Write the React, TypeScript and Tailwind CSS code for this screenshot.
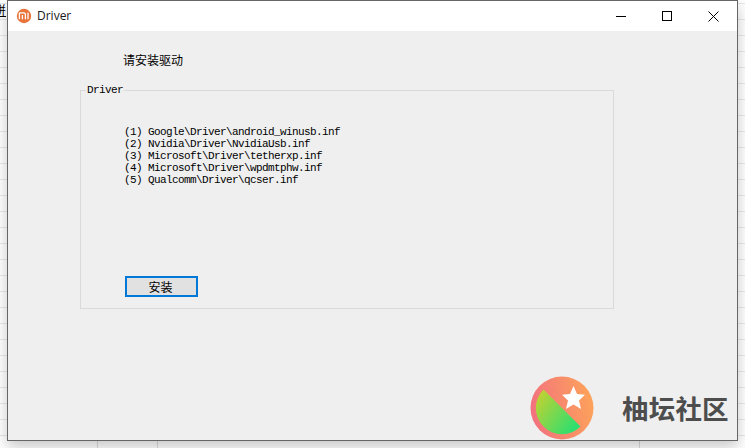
import React from 'react'

const drivers = [
  '(1) Google\\Driver\\android_winusb.inf',
  '(2) Nvidia\\Driver\\NvidiaUsb.inf',
  '(3) Microsoft\\Driver\\tetherxp.inf',
  '(4) Microsoft\\Driver\\wpdmtphw.inf',
  '(5) Qualcomm\\Driver\\qcser.inf',
]

const simsun = "font-['Liberation_Mono','Noto_Sans_CJK_SC',monospace]"

function MiIcon() {
  return (
    <svg width="16" height="16" viewBox="0 0 16 16" className="shrink-0">
      <circle cx="8" cy="8" r="7.2" fill="#e8743b" />
      <path d="M3.4 4.8h4.4a1.6 1.6 0 0 1 1.6 1.6v4.8M3.4 4.8v6.4M6.4 7v4.2M12 4.8v6.4" fill="none" stroke="#fff" strokeWidth="1.3" />
    </svg>
  )
}

function Watermark() {
  return (
    <svg width="64" height="64" viewBox="0 0 64 64">
      <defs>
        <linearGradient id="ring" x1="0" y1="0.6" x2="1" y2="0.4">
          <stop offset="0" stopColor="#f2707f" />
          <stop offset="1" stopColor="#fda35a" />
        </linearGradient>
        <linearGradient id="leaf" x1="0" y1="0" x2="1" y2="0.7">
          <stop offset="0" stopColor="#cfd02c" />
          <stop offset="1" stopColor="#2cdf70" />
        </linearGradient>
      </defs>
      <circle cx="32" cy="32" r="31.5" fill="url(#ring)" />
      <path d="M13.5 13.5 L50.5 50.5 A26 26 0 0 1 13.5 13.5 Z" fill="url(#leaf)" />
      <path d="M43.5 10 L47 18 L55 18.8 L49 24.5 L51 33 L43.5 28.5 L36 33 L38 24.5 L32 18.8 L40 18 Z" fill="#fff" />
    </svg>
  )
}

export default function App() {
  return (
    <div className="relative h-[448px] w-[745px] overflow-hidden bg-white bg-[repeating-linear-gradient(180deg,transparent_0,transparent_3px,#e8e8e8_3px,#e8e8e8_4px,transparent_4px,transparent_16px)]">
      <div className="absolute bottom-0 left-[97px] h-[12px] w-px bg-[#dcdcdc]" />
      <div className="absolute bottom-0 left-[157px] h-[12px] w-px bg-[#dcdcdc]" />
      <div className="absolute bottom-0 left-[639px] h-[12px] w-px bg-[#dcdcdc]" />
      <span className="absolute left-[-6px] top-[2px] text-[12px] leading-[16px] text-black underline font-['Noto_Sans_CJK_SC',sans-serif]">拼</span>

      {/* the driver window */}
      <div className="absolute left-[7px] top-0 flex h-[441px] w-[731px] flex-col border border-[#666666] bg-[#efefef] shadow-[0_6px_14px_rgba(0,0,0,0.22)]">
        <div className="flex h-[30px] shrink-0 items-center bg-white pl-[8px]">
          <MiIcon />
          <span className="ml-[5px] text-[12px] text-[#1a1a1a] font-['Open_Sans',sans-serif]">Driver</span>
          <div className="ml-auto mr-[1px] flex items-center text-black">
            <div className="flex h-[30px] w-[46px] items-center justify-center">
              <div className="h-px w-[10px] bg-black" />
            </div>
            <div className="flex h-[30px] w-[46px] items-center justify-center">
              <div className="h-[10px] w-[10px] border border-black" />
            </div>
            <div className="flex h-[30px] w-[46px] items-center justify-center">
              <svg width="11" height="11" viewBox="0 0 11 11">
                <path d="M0.5 0.5 L10.5 10.5 M10.5 0.5 L0.5 10.5" stroke="#000" strokeWidth="1" fill="none" />
              </svg>
            </div>
          </div>
        </div>

        <div className="flex flex-col pl-[72px] pt-[21px]">
          <p className="ml-[43px] h-[16px] text-[12px] leading-[16px] text-black font-['Noto_Sans_CJK_SC',sans-serif]">请安装驱动</p>

          <div className="relative mt-[22px] flex h-[219px] w-[534px] flex-col border border-[#d9d9d9] pl-[44px] pt-[34px]">
            <span className={`absolute left-[5px] top-[-8px] bg-[#efefef] px-px text-[11px] leading-[14px] tracking-[-0.6px] text-black ${simsun}`}>Driver</span>
            <ul className={`-ml-px mt-px text-[11px] leading-[12px] tracking-[-0.6px] text-black ${simsun}`}>
              {drivers.map((d) => (
                <li key={d} className="whitespace-pre">{d}</li>
              ))}
            </ul>
            <button className="mt-auto mb-[11px] h-[21px] w-[73px] border-2 border-[#0078d7] bg-[#e1e1e1] pr-[2px] text-[12px] leading-[17px] text-black font-['Noto_Sans_CJK_SC',sans-serif]">安装</button>
          </div>
        </div>
      </div>

      {/* forum watermark over the window */}
      <div className="absolute left-[530px] top-[376px] flex items-center">
        <Watermark />
        <span className="ml-[28px] text-[26.5px] font-bold leading-[64px] tracking-[0.2px] text-[#4d4d4d] font-['Noto_Sans_CJK_SC',sans-serif]">柚坛社区</span>
      </div>
    </div>
  )
}
